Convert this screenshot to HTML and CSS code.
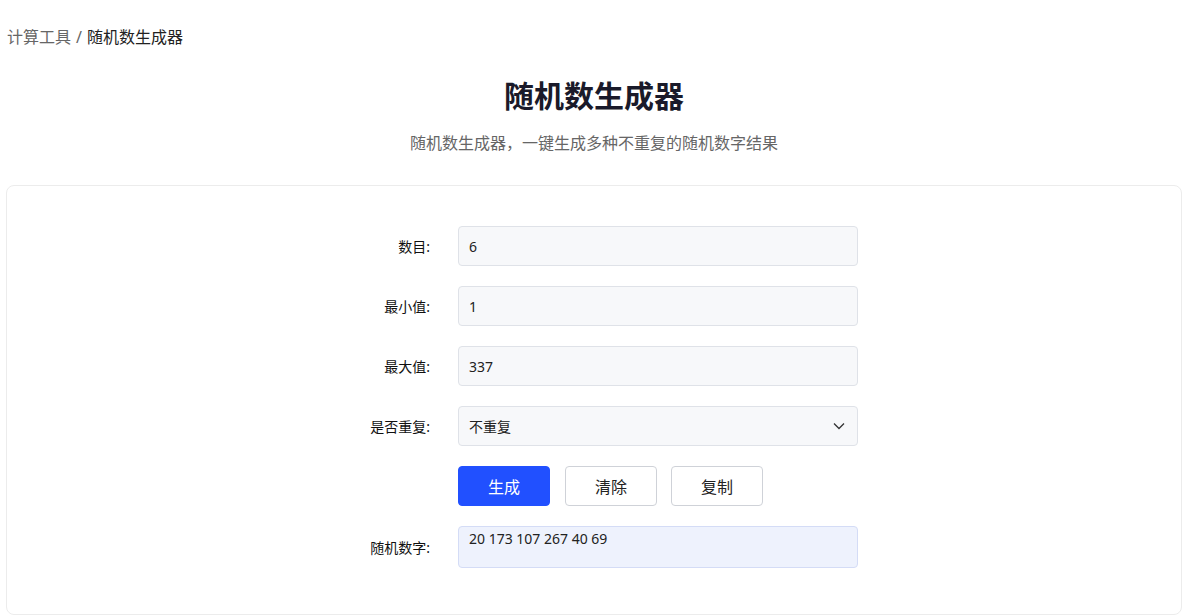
FILE: index.html
```html
<!DOCTYPE html>
<html lang="zh-CN">
<head>
<meta charset="utf-8">
<title>随机数生成器</title>
<link rel="stylesheet" href="styles.css">
</head>
<body>
<div class="page">
  <nav class="crumbs"><span class="crumb-link">计算工具</span><span class="sep">/</span><span class="crumb-cur">随机数生成器</span></nav>
  <header class="head">
    <h1 class="title">随机数生成器</h1>
    <p class="sub">随机数生成器，一键生成多种不重复的随机数字结果</p>
  </header>
  <section class="card">
    <div class="form">
      <div class="row">
        <label class="lbl">数目:</label>
        <div class="field"><div class="input">6</div></div>
      </div>
      <div class="row">
        <label class="lbl">最小值:</label>
        <div class="field"><div class="input">1</div></div>
      </div>
      <div class="row">
        <label class="lbl">最大值:</label>
        <div class="field"><div class="input">337</div></div>
      </div>
      <div class="row">
        <label class="lbl">是否重复:</label>
        <div class="field"><div class="input select"><span>不重复</span>
          <svg class="chev" width="12" height="8" viewBox="0 0 12 8"><path d="M1 1.5 L6 6.5 L11 1.5" fill="none" stroke="#333" stroke-width="1.3"/></svg></div></div>
      </div>
      <div class="row">
        <span class="lbl"></span>
        <div class="btns">
          <button class="btn primary">生成</button>
          <button class="btn">清除</button>
          <button class="btn">复制</button>
        </div>
      </div>
      <div class="row">
        <label class="lbl">随机数字:</label>
        <div class="field"><div class="result">20 173 107 267 40 69</div></div>
      </div>
    </div>
  </section>
</div>
</body>
</html>
```
FILE: styles.css
```css
* { box-sizing: border-box; }
html, body { margin: 0; padding: 0; background: #fff; }
body {
  font-family: "Noto Sans", "Noto Sans CJK SC", sans-serif;
  color: #222;
}
.page { padding: 0 3px 0 6px; }
.crumbs {
  padding-top: 26px;
  height: 48px;
  font-size: 16px;
  line-height: 22px;
  padding-left: 1px;
}
.crumb-link { color: #666; }
.sep { color: #666; margin: 0 5px; }
.crumb-cur { color: #222; }
.head { text-align: center; }
.title {
  margin: 28px 0 0;
  font-size: 30px;
  line-height: 40px;
  font-weight: 700;
  color: #1a1a2a;
}
.sub {
  margin: 16px 0 0;
  font-size: 16px;
  line-height: 22px;
  color: #666;
}
.card {
  margin-top: 31px;
  border: 1px solid #ececec;
  border-radius: 8px;
  padding: 40px 0 46px;
}
.form {
  display: flex;
  flex-direction: column;
  gap: 20px;
  width: 528px;
  margin: 0 auto;
}
.row {
  display: flex;
  align-items: center;
  gap: 28px;
}
.lbl {
  width: 100px;
  flex: none;
  text-align: right;
  font-size: 14px;
  color: #111;
}
.field { width: 400px; }
.input {
  height: 40px;
  border: 1px solid #dfe2e8;
  border-radius: 4px;
  background: #f7f8fa;
  padding: 0 10px;
  display: flex;
  align-items: center;
  font-size: 14px;
  color: #222;
}
.select { justify-content: space-between; padding-right: 12px; }
.chev { display: block; }
.btns { display: flex; gap: 15px; }
.btn {
  width: 92px;
  height: 40px;
  border: 1px solid #cfd2d8;
  border-radius: 4px;
  background: #fff;
  font-family: inherit;
  font-size: 16px;
  color: #222;
  padding: 0;
}
.btns .btn:nth-child(3) { margin-left: -1px; }
.btn.primary {
  background: #2150ff;
  border-color: #2150ff;
  color: #fff;
}
.result {
  height: 42px;
  border: 1px solid #d4dcf6;
  border-radius: 4px;
  background: #eef2fd;
  padding: 2px 10px;
  font-size: 14px;
  line-height: 20px;
  color: #222;
}
```
